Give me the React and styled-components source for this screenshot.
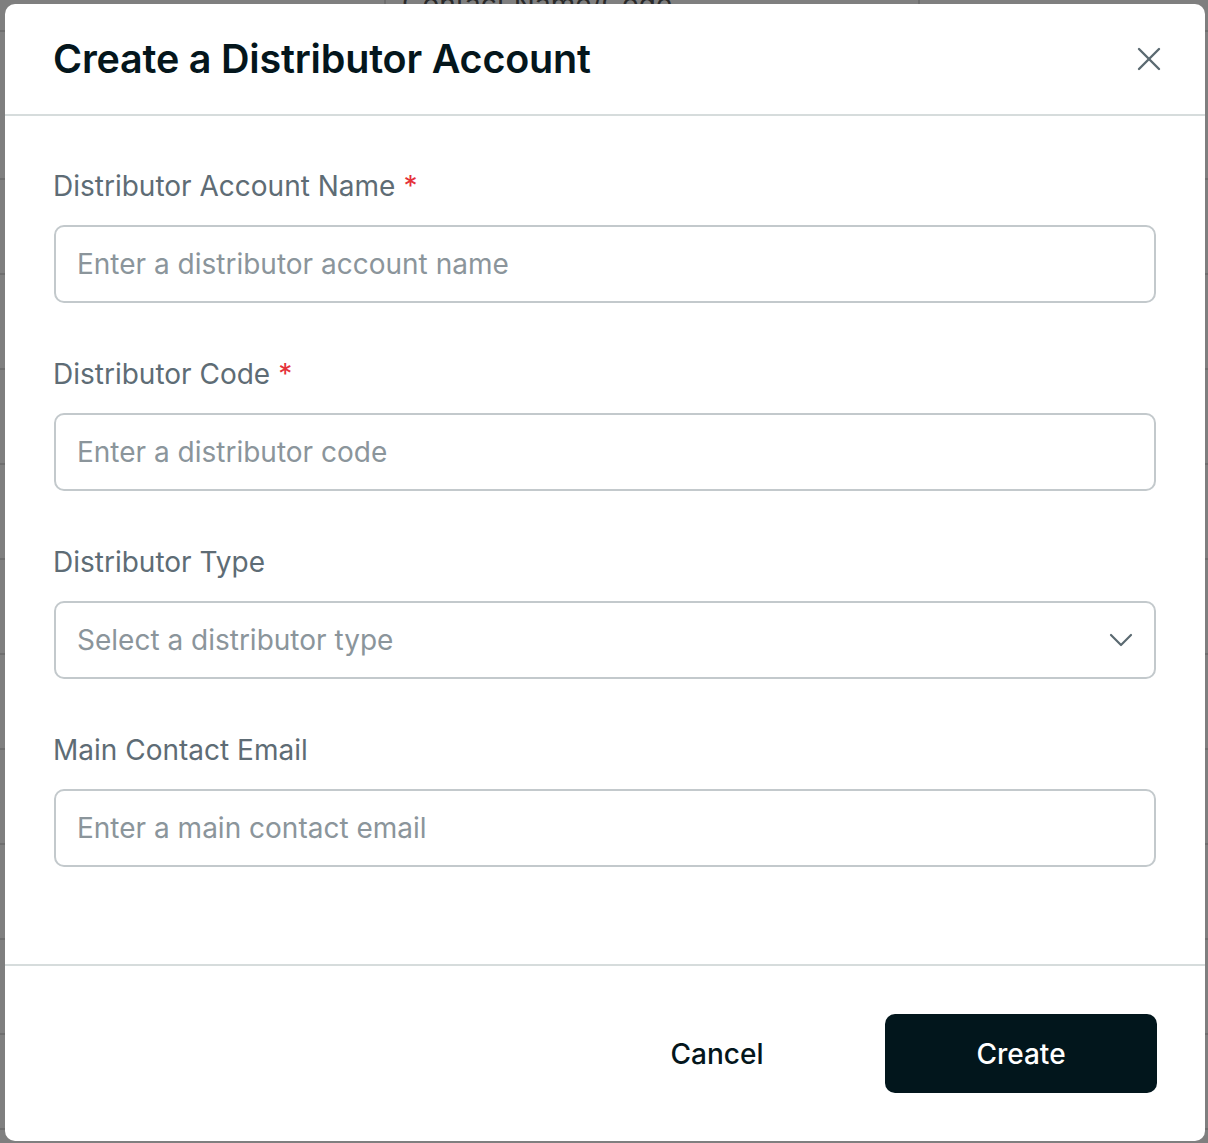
import React from "react";
import styled, { createGlobalStyle } from "styled-components";

const Global = createGlobalStyle`
  html, body { margin: 0; padding: 0; }
  body {
    font-family: Inter, "Noto Sans", "Liberation Sans", sans-serif;
    background: #ffffff;
    width: 1208px;
    height: 1143px;
    overflow: hidden;
  }
  * { box-sizing: border-box; }
`;

const Page = styled.div`
  position: relative;
  width: 1208px;
  height: 1143px;
  overflow: hidden;
  background: #ffffff;
`;

const BgTable = styled.div`
  display: flex;
  flex-direction: column;
  margin-top: -22px;
`;

const BgHeader = styled.div`
  display: flex;
  align-items: center;
  height: 54px;
  border-bottom: 2px solid #dcdcdc;
  font-size: 28px;
  color: #555;
`;

const BgHeadCell = styled.div`
  display: flex;
  align-items: center;
  width: ${(p) => p.$w}px;
  height: 100%;
  padding-left: ${(p) => p.$pl || 0}px;
  padding-right: ${(p) => p.$pr || 0}px;
  border-right: ${(p) => (p.$divider ? "2px solid #dcdcdc" : "none")};
  justify-content: ${(p) => p.$justify || "flex-start"};
`;

const BgRow = styled.div`
  height: ${(p) => p.$h}px;
  border-bottom: 2px solid #dcdcdc;
  display: flex;
  align-items: center;
  font-size: 26px;
  color: #111;
`;

const EdgeText = styled.span`
  margin-left: -14px;
`;

const Overlay = styled.div`
  position: absolute;
  inset: 0;
  background: rgba(0, 0, 0, 0.5);
`;

const Modal = styled.div`
  position: absolute;
  left: 5px;
  top: 4px;
  width: 1200px;
  height: 1137px;
  background: #ffffff;
  border-radius: 10px;
  display: flex;
  flex-direction: column;
  overflow: hidden;
`;

const Header = styled.div`
  height: 112px;
  flex: none;
  display: flex;
  align-items: center;
  justify-content: space-between;
  padding: 0 40px 0 48px;
  border-bottom: 2px solid #d6dcdc;
`;

const Title = styled.h2`
  margin: 0;
  font-size: 39.5px;
  font-weight: 600;
  color: #04161c;
  letter-spacing: -0.2px;
  line-height: 1;
  padding-top: 2px;
`;

const CloseButton = styled.button`
  border: none;
  background: transparent;
  padding: 0;
  width: 32px;
  height: 32px;
  display: flex;
  align-items: center;
  justify-content: center;
  cursor: pointer;
  color: #5b6a71;
`;

const Body = styled.div`
  flex: 1;
  display: flex;
  flex-direction: column;
  gap: 55px;
  padding: 54px 49px 0 49px;
`;

const Field = styled.div`
  display: flex;
  flex-direction: column;
  gap: 23px;
`;

const Label = styled.label`
  display: flex;
  align-items: center;
  gap: 8px;
  height: 32px;
  font-size: 28px;
  font-weight: 400;
  color: #5e6c75;
  line-height: 32px;
  margin-left: -1px;
`;

const Required = styled.span`
  color: #e5333a;
  font-size: 28px;
`;

const InputBox = styled.div`
  position: relative;
  height: 78px;
  border: 2px solid #c3c9cc;
  border-radius: 10px;
  display: flex;
  align-items: center;
  padding: 0 21px 0 21px;
  background: #fff;
`;

const Input = styled.input`
  border: none;
  outline: none;
  background: transparent;
  flex: 1;
  font-family: inherit;
  font-size: 28px;
  color: #04161c;
  padding: 0;
  &::placeholder {
    color: #8b959b;
  }
`;

const SelectText = styled.span`
  flex: 1;
  font-size: 28px;
  color: #8b959b;
`;

const Chevron = styled.svg`
  flex: none;
`;

const Footer = styled.div`
  flex: none;
  height: 177px;
  border-top: 2px solid #d6dcdc;
  display: flex;
  align-items: center;
  justify-content: flex-end;
  gap: 32px;
  padding: 0 48px 0 49px;
`;

const Button = styled.button`
  width: 272px;
  height: 79px;
  border-radius: 10px;
  border: none;
  font-family: inherit;
  font-size: 28px;
  font-weight: 500;
  cursor: pointer;
  background: ${(p) => (p.$primary ? "#02161c" : "transparent")};
  color: ${(p) => (p.$primary ? "#ffffff" : "#04161c")};
`;

const fields = [
  { label: "Distributor Account Name", required: true, placeholder: "Enter a distributor account name" },
  { label: "Distributor Code", required: true, placeholder: "Enter a distributor code" },
  { label: "Distributor Type", select: true, placeholder: "Select a distributor type" },
  { label: "Main Contact Email", placeholder: "Enter a main contact email" },
];

const bgRows = [148, 95, 95, 95, 95, 95, 95, 95, 95, 95, 95, 95];

export default function App() {
  return (
    <>
      <Global />
      <Page>
        <BgTable>
          <BgHeader>
            <BgHeadCell $w={350} $justify="flex-end" $pr={20}>⌄</BgHeadCell>
            <BgHeadCell $w={36} $divider />
            <BgHeadCell $w={534} $pl={16} $divider>
              Contact Name/Code
            </BgHeadCell>
          </BgHeader>
          {bgRows.map((h, i) => (
            <BgRow key={i} $h={h}>
              {(i === 2 || i === 7) && <EdgeText>c</EdgeText>}
            </BgRow>
          ))}
        </BgTable>
        <Overlay />
        <Modal role="dialog" aria-label="Create a Distributor Account">
          <Header>
            <Title>Create a Distributor Account</Title>
            <CloseButton aria-label="Close">
              <svg width="24" height="24" viewBox="0 0 24 24" fill="none" stroke="currentColor" strokeWidth="2.4" strokeLinecap="round">
                <path d="M2 2 L22 22" />
                <path d="M22 2 L2 22" />
              </svg>
            </CloseButton>
          </Header>
          <Body>
            {fields.map((f) => (
              <Field key={f.label}>
                <Label>
                  {f.label}
                  {f.required && <Required>*</Required>}
                </Label>
                <InputBox>
                  {f.select ? (
                    <>
                      <SelectText>{f.placeholder}</SelectText>
                      <Chevron width="24" height="14" viewBox="0 0 24 14" fill="none" stroke="#5b6a71" strokeWidth="2.2" strokeLinecap="round" strokeLinejoin="round">
                        <path d="M2 2 L12 12 L22 2" />
                      </Chevron>
                    </>
                  ) : (
                    <Input placeholder={f.placeholder} />
                  )}
                </InputBox>
              </Field>
            ))}
          </Body>
          <Footer>
            <Button>Cancel</Button>
            <Button $primary>Create</Button>
          </Footer>
        </Modal>
      </Page>
    </>
  );
}
